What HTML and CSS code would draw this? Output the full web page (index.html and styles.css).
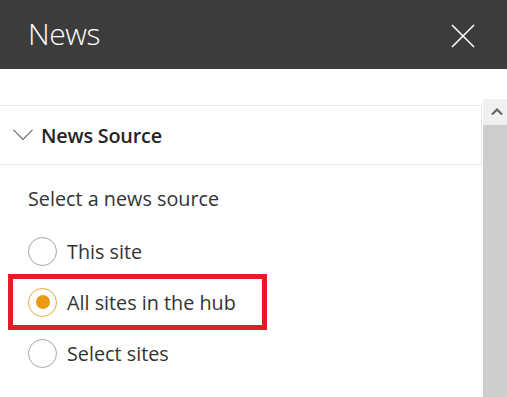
FILE: index.html
```html
<!DOCTYPE html>
<html>
<head>
<meta charset="utf-8">
<link rel="stylesheet" href="styles.css">
</head>
<body>
<div class="panel">
  <header class="header">
    <span class="title">News</span>
    <button class="close" aria-label="Close">
      <svg width="24" height="24" viewBox="0 0 24 24"><path d="M1 1 L23 23 M23 1 L1 23" stroke="#fff" stroke-width="1.6" fill="none"/></svg>
    </button>
  </header>
  <div class="body">
    <main class="content">
      <div class="group-header">
        <svg class="chevron" width="20" height="12" viewBox="0 0 20 12"><path d="M0.5 0.8 L10 10.5 L19.5 0.8" stroke="#6e6e6e" stroke-width="1.2" fill="none"/></svg>
        <span class="group-title">News Source</span>
      </div>
      <div class="group-body">
        <div class="label">Select a news source</div>
        <div class="options">
          <label class="option"><span class="radio"></span><span>This site</span></label>
          <label class="option selected highlight"><span class="radio"><span class="dot"></span></span><span>All sites in the hub</span></label>
          <label class="option"><span class="radio"></span><span>Select sites</span></label>
        </div>
      </div>
    </main>
    <div class="scrollbar">
      <div class="scroll-up">
        <svg width="12" height="8" viewBox="0 0 12 8"><path d="M0 7 L6 1 L12 7 L10 8 L6 4 L2 8 Z" fill="#5f5f5f"/></svg>
      </div>
      <div class="scroll-thumb"></div>
    </div>
  </div>
</div>
</body>
</html>
```

FILE: styles.css
```css
html, body {
  margin: 0;
  padding: 0;
  width: 507px;
  height: 397px;
  overflow: hidden;
  background: #fff;
  font-family: "Open Sans", "Noto Sans", sans-serif;
}
.panel {
  display: flex;
  flex-direction: column;
  height: 397px;
}
.header {
  height: 69px;
  flex: none;
  background: #3c3c3c;
  display: flex;
  align-items: center;
  justify-content: space-between;
  padding: 0 32px 0 28px;
  box-sizing: border-box;
}
.title {
  color: #fff;
  font-size: 30px;
  font-weight: 300;
  letter-spacing: -0.4px;
  line-height: 1;
  margin-top: -2px;
}
.close {
  background: none;
  border: 0;
  padding: 0;
  width: 24px;
  height: 24px;
  display: block;
  margin-top: 2px;
}
.close svg { display: block; }
.body {
  flex: 1;
  display: flex;
  min-height: 0;
}
.content {
  flex: 1;
  padding-top: 36px;
  min-width: 0;
}
.group-header {
  height: 58px;
  border: 1px solid #e6e6e6;
  border-left: 0;
  display: flex;
  align-items: center;
  padding-left: 13px;
  box-sizing: content-box;
}
.chevron {
  display: block;
  margin-right: 8px;
  margin-top: -1px;
}
.group-title {
  font-size: 19.8px;
  font-weight: 600;
  color: #262626;
  letter-spacing: -0.2px;
}
.group-body {
  padding: 20px 0 0 8px;
}
.label {
  font-size: 19.8px;
  color: #333;
  padding-left: 20px;
  line-height: 28px;
}
.options {
  margin-top: 18px;
  display: flex;
  flex-direction: column;
  gap: 11px;
}
.option {
  display: flex;
  align-items: center;
  gap: 10px;
  height: 40px;
  font-size: 19.8px;
  color: #333;
  padding-left: 20px;
  box-sizing: border-box;
  width: 259px;
}
.option.highlight {
  border: 5px solid #e21d25;
  padding-left: 15px;
  height: 56px;
  margin: -8px 0;
}
.radio {
  width: 27px;
  height: 27px;
  border: 1px solid #a6a6a6;
  border-radius: 50%;
  display: flex;
  align-items: center;
  justify-content: center;
  flex: none;
}
.selected .radio {
  border-color: #eaa43a;
}
.dot {
  width: 14px;
  height: 14px;
  border-radius: 50%;
  background: #ec9a14;
}
.scrollbar {
  width: 24px;
  flex: none;
  margin-top: 30px;
  margin-left: 1px;
  display: flex;
  flex-direction: column;
}
.scroll-up {
  height: 26px;
  background: #f0f0f0;
  display: flex;
  align-items: center;
  justify-content: center;
  padding-left: 4px;
}
.scroll-up svg { display: block; margin-top: -2px; }
.scroll-thumb {
  flex: 1;
  background: #cdcdcd;
}
```
